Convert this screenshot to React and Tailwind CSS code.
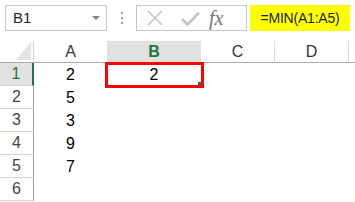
import React from 'react';

const rows = [1, 2, 3, 4, 5, 6];
const colA = ['2', '5', '3', '9', '7', ''];

const font = { fontFamily: '"Liberation Sans", Arial, sans-serif' };

const App = () => {
  return (
    <div className="w-[355px] h-[202px] bg-white overflow-hidden" style={font}>
      {/* formula bar */}
      <div className="flex items-center h-[26px] mt-[5px]">
        <div className="ml-[5px] w-[102px] h-[26px] border border-[#c6c6c6] flex items-center justify-between pl-[7px] pr-[6px]">
          <span className="text-[15px] text-[#222]">B1</span>
          <span className="w-0 h-0 border-l-[4px] border-r-[4px] border-t-[4px] border-l-transparent border-r-transparent border-t-[#808080]" />
        </div>
        <div className="ml-[14px] flex flex-col gap-[3px]">
          <span className="w-[2px] h-[2px] bg-[#a0a0a0]" />
          <span className="w-[2px] h-[2px] bg-[#a0a0a0]" />
          <span className="w-[2px] h-[2px] bg-[#a0a0a0]" />
        </div>
        <div className="ml-[13px] w-[111px] h-[26px] border border-[#c6c6c6] flex items-center">
          <svg width="16" height="16" viewBox="0 0 16 16" className="ml-[10px]">
            <path d="M1 1 L15 15 M15 1 L1 15" stroke="#c4c4c4" strokeWidth="1.6" fill="none" />
          </svg>
          <svg width="19" height="15" viewBox="0 0 19 15" className="ml-[18px]">
            <path d="M1 8 L6.5 13.5 L18 1.5" stroke="#c4c4c4" strokeWidth="2.6" fill="none" />
          </svg>
          <span
            className="ml-[9px] text-[20px] leading-none italic text-[#767676]"
            style={{ fontFamily: '"Liberation Serif", "Times New Roman", serif' }}
          >
            fx
          </span>
        </div>
        <div className="ml-[3px] w-[100px] h-[26px] bg-[#ffff00] flex items-center justify-center text-[14px] tracking-[-0.2px] text-[#222]">
          =MIN(A1:A5)
        </div>
      </div>

      {/* sheet */}
      <div className="mt-[10px] grid grid-cols-[34px_73px_94px_74px_74px_1fr]">
        {/* header row */}
        <div className="h-[22px] border-b border-[#ababab] border-r border-r-[#d4d4d4] flex items-end justify-end pr-[2px] pb-[2px]">
          <svg width="15" height="18" viewBox="0 0 15 18">
            <path d="M15 0 L15 18 L0 18 Z" fill="#e3e3e3" />
          </svg>
        </div>
        <div className="h-[22px] border-b border-[#ababab] flex items-center justify-center text-[16px] text-[#333]">A</div>
        <div className="h-[22px] border-b border-[#ababab] bg-[#e1e1e1] flex items-center justify-center text-[16px] font-bold text-[#217346]">B</div>
        <div className="h-[22px] border-b border-[#ababab] border-r border-r-[#dadada] flex items-center justify-center text-[16px] text-[#333]">C</div>
        <div className="h-[22px] border-b border-[#ababab] border-r border-r-[#dadada] flex items-center justify-center text-[16px] text-[#333]">D</div>
        <div className="h-[22px] border-b border-[#ababab]" />

        {rows.map((r, i) => (
          <React.Fragment key={r}>
            <div
              className={
                r === 1
                  ? 'h-[23px] bg-[#e1e1e1] border-r-2 border-r-[#217346] border-b border-b-[#d4d4d4] flex items-center justify-center text-[16px] text-[#217346]'
                  : 'h-[23px] border-r border-r-[#9f9f9f] border-b border-b-[#d4d4d4] flex items-center justify-center text-[16px] text-[#444]'
              }
            >
              {r}
            </div>
            <div className="h-[23px] flex items-center justify-center text-[16px] text-black">{colA[i]}</div>
            <div className="h-[23px] relative flex items-center justify-center text-[16px] text-black">
              {r === 1 && (
                <>
                  2
                  <div className="absolute -left-[2px] -top-[1px] w-[99px] h-[26px] border-[3px] border-[#ff0000]">
                    <span className="absolute right-0 bottom-0 w-[3px] h-[3px] bg-[#217346]" />
                  </div>
                </>
              )}
            </div>
            <div className="h-[23px]" />
            <div className="h-[23px]" />
            <div className="h-[23px]" />
          </React.Fragment>
        ))}
      </div>
    </div>
  );
};

export default App;
